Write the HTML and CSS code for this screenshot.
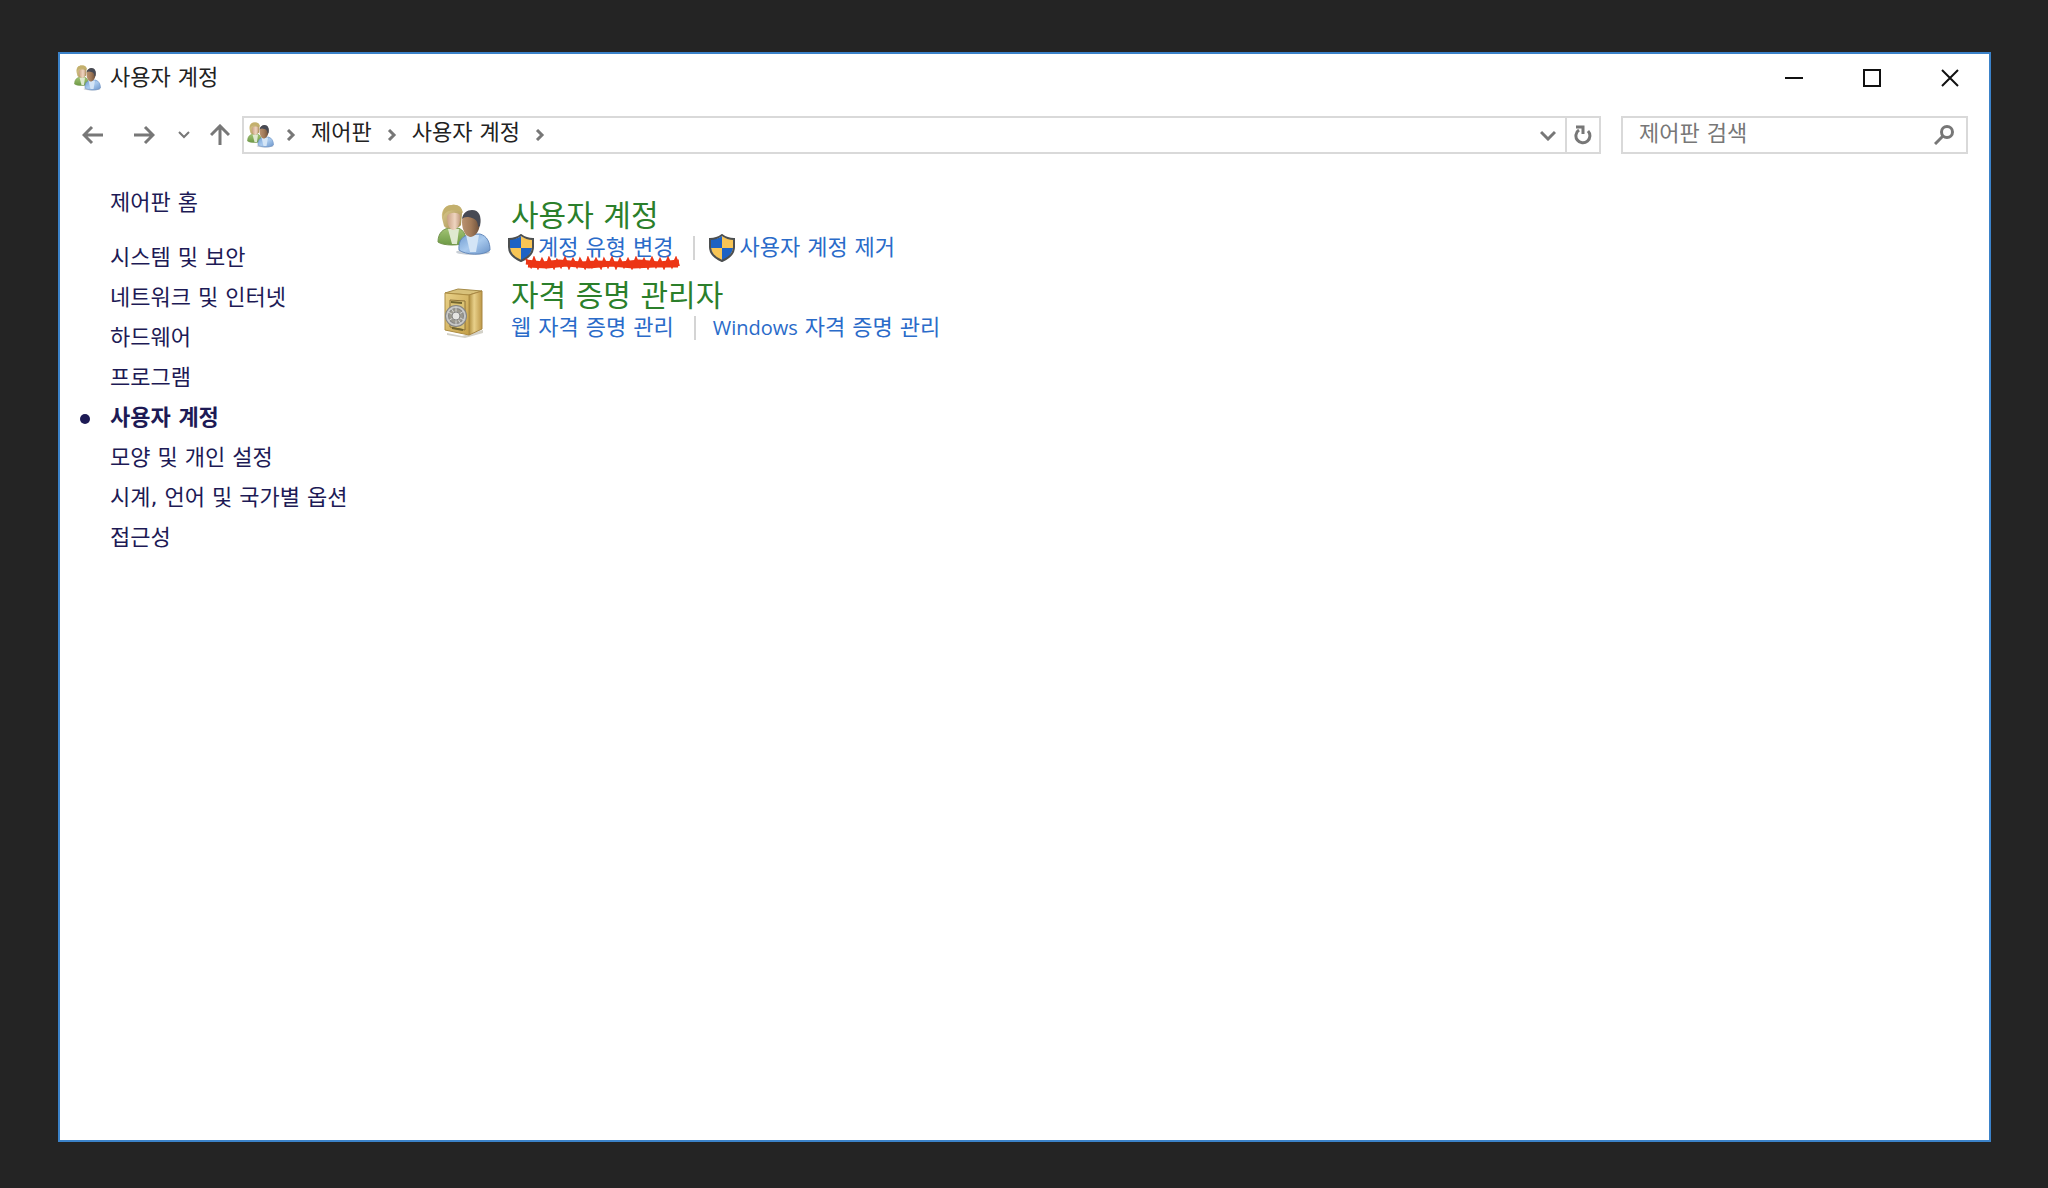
FILE: index.html
```html
<!DOCTYPE html>
<html lang="ko">
<head>
  <meta charset="UTF-8" />
  <meta name="viewport" content="width=device-width, initial-scale=1.0"/>
  <title>사용자 계정</title>
  <link rel="stylesheet" href="styles.css">
</head>
<body>
  <!-- shared icons -->
  <svg class="defs" aria-hidden="true">
    <defs>
      <linearGradient id="green" x1="0" y1="0" x2="0" y2="1">
        <stop offset="0" stop-color="#a3c475"/>
        <stop offset="1" stop-color="#6d9a45"/>
      </linearGradient>
      <linearGradient id="blue" x1="0" y1="0" x2="1" y2="1">
        <stop offset="0" stop-color="#6f9bd0"/>
        <stop offset="0.5" stop-color="#a9caee"/>
        <stop offset="1" stop-color="#6b94c9"/>
      </linearGradient>
      <linearGradient id="skin" x1="0" y1="0" x2="1" y2="0">
        <stop offset="0" stop-color="#c9a084"/>
        <stop offset="0.6" stop-color="#efd5c0"/>
        <stop offset="1" stop-color="#c29c80"/>
      </linearGradient>
      <linearGradient id="skin-dark" x1="0" y1="0" x2="1" y2="0">
        <stop offset="0" stop-color="#b99270"/>
        <stop offset="0.5" stop-color="#a27a58"/>
        <stop offset="1" stop-color="#6b4e39"/>
      </linearGradient>
      <linearGradient id="hair" x1="0" y1="0" x2="1" y2="1">
        <stop offset="0" stop-color="#dfcf94"/>
        <stop offset="1" stop-color="#a58d50"/>
      </linearGradient>
      <linearGradient id="gold" x1="0" y1="0" x2="1" y2="1">
        <stop offset="0" stop-color="#e9d189"/>
        <stop offset="1" stop-color="#c49f47"/>
      </linearGradient>
      <linearGradient id="gold-side" x1="0" y1="0" x2="1" y2="0">
        <stop offset="0" stop-color="#b08f40"/>
        <stop offset="0.4" stop-color="#e8d08a"/>
        <stop offset="1" stop-color="#bd9848"/>
      </linearGradient>
    </defs>
    <symbol id="users" viewBox="0 0 54 52">
      <ellipse cx="36" cy="48" rx="17" ry="3" fill="#c9cfd6"/>
      <path d="M1 38C1 29 6 25 12 24H21C27 26 29 31 29 38C24 42 6 42 1 38Z" fill="url(#green)" stroke="#74954e"/>
      <path d="M11 25L15 40H20L22 25Z" fill="#dfe9cf"/>
      <path d="M5 14C4 5 9 1 15 1C22 0 26 4 25 10L24 21C22 25 9 26 7 22Z" fill="url(#hair)"/>
      <path d="M10 12C13 8 20 8 23 11C24 18 21 26 16 26C12 25 10 20 10 12Z" fill="url(#skin)"/>
      <path d="M6 13C9 5 19 5 26 9C25 3 20 0 15 1C9 1 5 5 6 13Z" fill="#c3b06d"/>
      <path d="M22 46C21 36 26 32 33 30H43C50 32 53 38 53 46C47 52 28 51 22 46Z" fill="url(#blue)" stroke="#6489bb"/>
      <path d="M29 31L33 48H39L42 31Z" fill="#d4e5f6"/>
      <path d="M25 18C25 10 29 7 35 7C41 7 44 12 43 20C42 28 38 33 33 33C28 32 25 25 25 18Z" fill="url(#skin-dark)"/>
      <path d="M25 15C26 9 30 6 35 6C42 6 45 12 43 22L41 23C41 18 39 15 35 14C30 12 27 13 25 15Z" fill="#474a54"/>
    </symbol>
    <symbol id="safe" viewBox="0 0 42 50">
      <path d="M4 45L19 48L40 42V45L22 50L4 47Z" fill="#d3d1c8"/>
      <path d="M2 5L15 1L39 3L26 7Z" fill="#d8c17a" stroke="#a58b48"/>
      <path d="M26 7L39 3V41L26 47Z" fill="url(#gold-side)" stroke="#a88643"/>
      <path d="M2 5L26 7V47L2 42Z" fill="url(#gold)" stroke="#ad8d43"/>
      <path d="M7 12L22 13V42L7 39Z" fill="#dcc374" stroke="#8e7338"/>
      <path d="M8 14L19 15M9 40L20 42" stroke="#72652f" stroke-width="2"/>
      <circle cx="13" cy="28" r="9" fill="#9c9a90" stroke="#858583" stroke-width="4"/>
      <circle cx="13" cy="28" r="9" fill="none" stroke="#c6c7c6" stroke-width="2"/>
      <path d="M13 19V37M5 24L21 32M5 33L21 23M8 20L18 36" stroke="#d2d2d0"/>
      <circle cx="13" cy="28" r="4" fill="#e4e4e2" stroke="#868686"/>
    </symbol>
    <symbol id="shield" viewBox="0 0 26 28">
      <path d="M13 2C9 5 5 5 2 5V13C2 20 7 24 13 27Z" fill="#1d62c4"/>
      <path d="M13 2C17 5 21 5 24 5V13C24 20 19 24 13 27Z" fill="#f8c555"/>
      <path d="M2 14H13V27C7 24 3 20 2 14Z" fill="#f8c555"/>
      <path d="M13 14H24C23 20 19 24 13 27Z" fill="#1d62c4"/>
      <path d="M13 1C9 4 5 5 1 5V13C1 20 6 24 13 27C20 24 25 20 25 13V5C21 5 17 4 13 1Z" fill="none" stroke="#4c4f50" stroke-width="2"/>
    </symbol>
    <symbol id="chevron-right" viewBox="0 0 10 12">
      <path d="M2 1L7 6L2 11" fill="none" stroke="#777" stroke-width="3"/>
    </symbol>
  </svg>

  <div class="window">
    <header class="title-bar">
      <svg class="icon-users"><use href="#users"/></svg>
      <h1>사용자 계정</h1>
      <div class="window-buttons">
        <button aria-label="최소화">
          <svg width="18" height="18" viewBox="0 0 18 18"><path d="M0 9H18" stroke="#111" stroke-width="2"/></svg>
        </button>
        <button aria-label="최대화">
          <svg width="18" height="18" viewBox="0 0 18 18"><path d="M1 1H17V17H1Z" fill="none" stroke="#111" stroke-width="2"/></svg>
        </button>
        <button aria-label="닫기">
          <svg width="18" height="18" viewBox="0 0 18 18"><path d="M1 1L17 17M17 1L1 17" stroke="#111" stroke-width="2"/></svg>
        </button>
      </div>
    </header>

    <div class="nav-bar">
      <nav class="history">
        <button aria-label="뒤로">
          <svg width="22" height="20" viewBox="0 0 22 20"><path d="M21 10H2M10 2L2 10L10 18" fill="none" stroke="#777" stroke-width="3"/></svg>
        </button>
        <button aria-label="앞으로">
          <svg width="22" height="20" viewBox="0 0 22 20"><path d="M1 10H20M12 2L20 10L12 18" fill="none" stroke="#777" stroke-width="3"/></svg>
        </button>
        <button class="recent" aria-label="최근 위치">
          <svg width="12" height="8" viewBox="0 0 12 8"><path d="M1 1L6 6L11 1" fill="none" stroke="#777" stroke-width="2"/></svg>
        </button>
        <button class="up" aria-label="위로">
          <svg width="20" height="22" viewBox="0 0 20 22"><path d="M10 21V2M1 11L10 2L19 11" fill="none" stroke="#777" stroke-width="3"/></svg>
        </button>
      </nav>

      <div class="address">
        <svg class="icon-users"><use href="#users"/></svg>
        <svg class="chevron"><use href="#chevron-right"/></svg>
        <a href="#">제어판</a>
        <svg class="chevron"><use href="#chevron-right"/></svg>
        <a href="#">사용자 계정</a>
        <svg class="chevron"><use href="#chevron-right"/></svg>
        <div class="address-buttons">
          <button aria-label="이전 위치">
            <svg width="16" height="12" viewBox="0 0 16 12"><path d="M1 3L8 10L15 3" fill="none" stroke="#777" stroke-width="3"/></svg>
          </button>
          <button class="refresh" aria-label="새로 고침">
            <svg width="18" height="20" viewBox="0 0 18 20"><path d="M14 6A7 7 0 1 1 5 5" fill="none" stroke="#777" stroke-width="3"/><path d="M2 2H9V9" fill="none" stroke="#777" stroke-width="3"/></svg>
          </button>
        </div>
      </div>

      <form class="search">
        <input type="search" placeholder="제어판 검색" aria-label="제어판 검색" />
        <button type="button" aria-label="검색">
          <svg width="20" height="20" viewBox="0 0 20 20"><circle cx="13" cy="7" r="5.5" fill="none" stroke="#777" stroke-width="3"/><path d="M9 11L1 19" stroke="#777" stroke-width="3"/></svg>
        </button>
      </form>
    </div>

    <div class="content">
      <aside class="sidebar">
        <a class="home" href="#">제어판 홈</a>
        <ul>
          <li><a href="#">시스템 및 보안</a></li>
          <li><a href="#">네트워크 및 인터넷</a></li>
          <li><a href="#">하드웨어</a></li>
          <li><a href="#">프로그램</a></li>
          <li class="current"><a href="#">사용자 계정</a></li>
          <li><a href="#">모양 및 개인 설정</a></li>
          <li><a href="#">시계, 언어 및 국가별 옵션</a></li>
          <li><a href="#">접근성</a></li>
        </ul>
      </aside>

      <main class="main">
        <section class="category">
          <svg class="category-icon"><use href="#users"/></svg>
          <div>
            <h2><a href="#">사용자 계정</a></h2>
            <div class="tasks">
              <a class="admin marked" href="#">
                <svg class="shield"><use href="#shield"/></svg>계정 유형 변경
                <svg class="scribble" viewBox="0 0 158 14"><path d="M3 3L8 11L11 2L15 12L19 3L23 11L26 2L31 12L34 4L38 11L42 2L46 12L50 3L54 11L57 3L62 12L65 2L69 11L73 3L78 12L81 3L85 11L89 2L93 12L97 3L101 11L105 3L109 12L113 2L117 11L121 3L125 12L129 2L133 11L137 3L141 12L145 2L149 11L153 2L156 10"/><path class="fill" d="M3 6L20 8L36 6L58 8L74 7L98 8L116 6L136 8L156 6M5 9L24 10L44 8L66 10L88 8L110 10L132 9L155 9"/></svg>
              </a>
              <a class="admin" href="#"><svg class="shield"><use href="#shield"/></svg>사용자 계정 제거</a>
            </div>
          </div>
        </section>

        <section class="category">
          <svg class="category-icon safe"><use href="#safe"/></svg>
          <div>
            <h2><a href="#">자격 증명 관리자</a></h2>
            <div class="tasks">
              <a href="#">웹 자격 증명 관리</a>
              <a href="#"><span class="latin">Windows</span> 자격 증명 관리</a>
            </div>
          </div>
        </section>
      </main>
    </div>
  </div>
</body>
</html>
```
FILE: styles.css
```css
* {
  box-sizing: border-box;
}
body {
  margin: 0;
  padding: 52px 57px 46px 58px;
  min-height: 100vh;
  display: flex;
  background-color: #242424;
  font-family: "DejaVu Sans", "Noto Sans CJK KR", sans-serif;
  font-size: 22px;
  line-height: 32px;
  color: #222;
}
a {
  color: inherit;
  text-decoration: none;
}
button {
  display: flex;
  align-items: center;
  justify-content: center;
  padding: 0;
  border: none;
  background: none;
  cursor: pointer;
}
svg {
  flex: none;
}
.defs {
  position: absolute;
  width: 0;
  height: 0;
}
.window {
  flex: 1;
  background-color: #fff;
  border: 2px solid #3b82c9;
}

/* title bar */
.title-bar {
  display: flex;
  align-items: center;
  gap: 8px;
  height: 48px;
  padding-left: 13px;
}
.title-bar h1 {
  margin: 0;
  font-size: 22px;
  font-weight: normal;
}
.icon-users {
  width: 29px;
  height: 26px;
}
.window-buttons {
  display: flex;
  margin-left: auto;
}
.window-buttons button {
  width: 78px;
  height: 48px;
}

/* navigation */
.nav-bar {
  display: flex;
  align-items: center;
  padding: 14px 21px 0 15px;
}
.history {
  display: flex;
  align-items: center;
  gap: 15px;
}
.history button {
  height: 36px;
  width: 36px;
}
.history .recent {
  width: 14px;
}
.history .up {
  width: 28px;
}
.address {
  flex: 1;
  display: flex;
  align-items: center;
  gap: 15px;
  height: 38px;
  margin-left: 8px;
  padding-left: 2px;
  border: 2px solid #d9d9d9;
}
.address a {
  padding-bottom: 4px;
}
.address .icon-users {
  margin-right: -4px;
}
.chevron {
  width: 10px;
  height: 12px;
}
.address-buttons {
  display: flex;
  margin-left: auto;
}
.address-buttons button {
  width: 34px;
  height: 34px;
}
.address-buttons .refresh {
  border-left: 2px solid #d9d9d9;
}
.search {
  display: flex;
  width: 347px;
  height: 38px;
  margin-left: 20px;
  padding: 0 12px 0 16px;
  border: 2px solid #d9d9d9;
}
.search input {
  flex: 1;
  min-width: 0;
  padding: 0 0 2px;
  border: none;
  outline: none;
  font: inherit;
}
.search input::placeholder {
  color: #777;
  opacity: 1;
}

/* content */
.content {
  display: flex;
  padding-top: 29px;
}
.sidebar {
  width: 377px;
  padding-left: 50px;
  line-height: 40px;
  color: #1d1a55;
}
.home {
  display: block;
  margin-bottom: 15px;
}
.sidebar ul {
  margin: 0;
  padding: 0;
  list-style: none;
}
.current {
  position: relative;
  font-weight: bold;
}
.current::before {
  content: "";
  position: absolute;
  left: -30px;
  top: 16px;
  width: 10px;
  height: 10px;
  border-radius: 50%;
  background-color: #1d1a55;
}
.main {
  flex: 1;
  padding-top: 13px;
}
.category {
  display: flex;
  gap: 20px;
  margin-bottom: 12px;
}
.category-icon {
  width: 54px;
  height: 52px;
  margin-top: 8px;
}
.category-icon.safe {
  height: 50px;
  margin-top: 12px;
}
.category h2 {
  margin: 0;
  padding-top: 4px;
  font-size: 30px;
  font-weight: normal;
  line-height: 32px;
  color: #2b7f2b;
}
.tasks {
  display: flex;
  align-items: center;
  color: #2a6bc9;
}
.tasks a + a {
  margin-left: 20px;
  padding-left: 19px;
  background: linear-gradient(#d4d4d4, #d4d4d4) no-repeat left center / 2px 24px;
}
.admin {
  display: flex;
  align-items: center;
  gap: 4px;
}
.shield {
  width: 26px;
  height: 28px;
  margin-left: -3px;
}
.marked {
  position: relative;
}
.scribble {
  position: absolute;
  left: 12px;
  top: 24px;
  width: 158px;
  height: 14px;
  fill: none;
  stroke: #ec3515;
  stroke-width: 2;
}
.scribble .fill {
  stroke-width: 5;
}
.latin {
  font-family: "Open Sans", sans-serif;
  font-size: 20px;
}
```
